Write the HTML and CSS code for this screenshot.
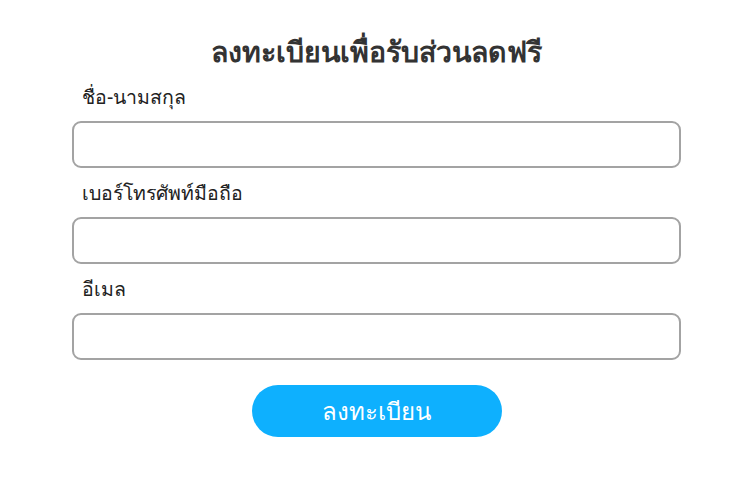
FILE: index.html
```html
<!DOCTYPE html>
<html lang="th">
<head>
<meta charset="utf-8">
<link rel="stylesheet" href="styles.css">
</head>
<body>
<div class="form">
  <h1 class="title">ลงทะเบียนเพื่อรับส่วนลดฟรี</h1>
  <label class="label first">ชื่อ-นามสกุล</label>
  <div class="input"></div>
  <label class="label">เบอร์โทรศัพท์มือถือ</label>
  <div class="input"></div>
  <label class="label">อีเมล</label>
  <div class="input"></div>
  <div class="actions"><button class="btn">ลงทะเบียน</button></div>
</div>
</body>
</html>
```
FILE: styles.css
```css
html, body { margin: 0; padding: 0; background: #fff; }
body { font-family: "Noto Sans", "DejaVu Sans", sans-serif; color: #222; }
.form { width: 609px; margin: 0 0 0 72px; padding-top: 32px; display: flex; flex-direction: column; }
.title { margin: 0; text-align: center; font-size: 28.5px; line-height: 38px; font-weight: 700; color: #333; }
.label { display: block; padding-left: 10px; font-size: 19.5px; line-height: 24px; margin-top: 0; margin-bottom: 12px; color: #222; }
.label.first { margin-top: 15px; }
.input { height: 43px; border: 2px solid #a3a3a3; border-radius: 9px; margin-bottom: 13px; }
.actions { display: flex; justify-content: center; margin-top: 12px; }
.btn { width: 250px; height: 52px; border: 0; border-radius: 26px; background: #0eb0fe; color: #fff; font-family: inherit; font-size: 24px; font-weight: 500; }
```
